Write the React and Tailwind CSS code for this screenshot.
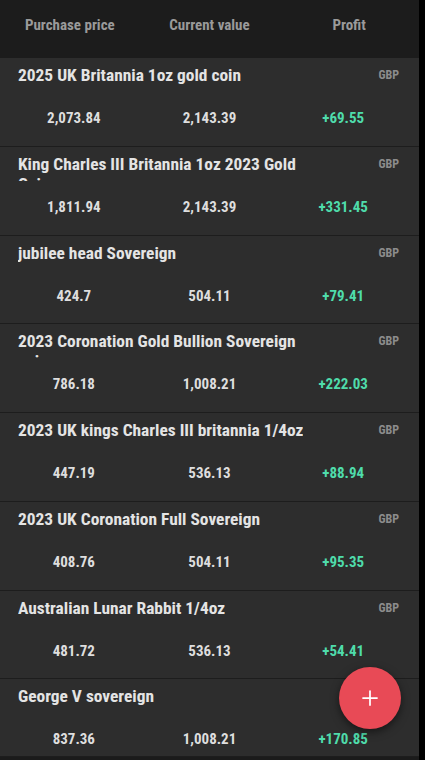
import { Plus } from 'lucide-react';

const holdings = [
    { name: '2025 UK Britannia 1oz gold coin', paid: '2,073.84', value: '2,143.39', profit: '+69.55' },
    { name: 'King Charles III Britannia 1oz 2023 Gold Coin', paid: '1,811.94', value: '2,143.39', profit: '+331.45' },
    { name: 'jubilee head Sovereign', paid: '424.7', value: '504.11', profit: '+79.41' },
    { name: '2023 Coronation Gold Bullion Sovereign coin', paid: '786.18', value: '1,008.21', profit: '+222.03' },
    { name: '2023 UK kings Charles III britannia 1/4oz', paid: '447.19', value: '536.13', profit: '+88.94' },
    { name: '2023 UK Coronation Full Sovereign', paid: '408.76', value: '504.11', profit: '+95.35' },
    { name: 'Australian Lunar Rabbit 1/4oz', paid: '481.72', value: '536.13', profit: '+54.41' },
    { name: 'George V sovereign', paid: '837.36', value: '1,008.21', profit: '+170.85' },
];

const font = { fontFamily: '"Roboto Condensed", "DejaVu Sans Condensed", Roboto, sans-serif' };

function HoldingRow({ item, last }) {
    return (
        <div
            className={`shrink-0 bg-[#2d2d2d] border-b border-[#1d1d1d] ${last ? 'h-[78px]' : 'h-[88.75px]'}`}
        >
            <div className="flex items-start justify-between pl-[18px] pr-[20px] pt-[7px]">
                <div className="h-[27px] max-w-[302px] overflow-hidden text-[17.4px] leading-[20px] font-bold text-[#e4e4e4] font-stretch-condensed">
                    {item.name}
                </div>
                <span className="pt-[3px] text-[12px] leading-[14px] font-bold text-[#8c8c8c] font-stretch-condensed">
                    GBP
                </span>
            </div>
            <div className="grid grid-cols-3 pt-[16px] text-[15px] leading-[20px] font-bold font-stretch-condensed">
                <span className="text-center text-[#dedede] pl-[8px]">{item.paid}</span>
                <span className="text-center text-[#dedede]">{item.value}</span>
                <span className="text-center text-[#4fdcab] pr-[12px]">{item.profit}</span>
            </div>
        </div>
    );
}

export default function App() {
    return (
        <div className="flex h-[760px] w-[425px] overflow-hidden bg-black" style={font}>
            <div className="relative flex w-[419px] flex-col bg-[#1b1b1b]">
                <div className="grid h-[58px] shrink-0 grid-cols-3 bg-[#1c1c1c] pt-[15px] text-[15px] leading-[20px] font-bold text-[#9a9a9a] font-stretch-condensed shadow-[0_2px_4px_rgba(0,0,0,0.4)]">
                    <span className="text-center">Purchase price</span>
                    <span className="text-center">Current value</span>
                    <span className="text-center">Profit</span>
                </div>
                {holdings.map((item, idx) => (
                    <HoldingRow key={idx} item={item} last={idx === holdings.length - 1} />
                ))}
                <button className="absolute left-[339px] top-[667px] flex h-[62px] w-[62px] items-center justify-center rounded-full bg-[#e84a56] text-white shadow-[0_3px_8px_rgba(0,0,0,0.5)]">
                    <Plus size={24} strokeWidth={1.75} />
                </button>
            </div>
        </div>
    );
}
